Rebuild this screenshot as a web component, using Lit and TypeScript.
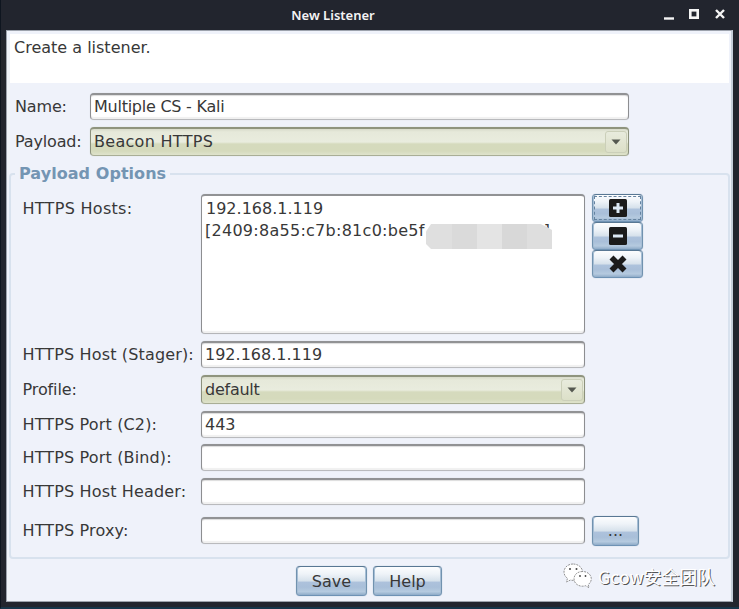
import { LitElement, html, svg, css } from "lit";
import { customElement, property } from "lit/decorators.js";

@customElement("text-field")
class TextField extends LitElement {
  @property() value = "";
  static styles = css`
    :host { display: block; box-sizing: border-box; height: 27px; background: #fff;
      border: 1px solid #8d8e91; border-top: 2px solid #919294; border-bottom-color: #b9babd;
      border-radius: 4px; padding-left: 3px; line-height: 23px; white-space: pre;
      box-shadow: inset 0 1px 1px #dcdcdc, inset 0 -2px 1px #f0f0f0, 0 0 1px #c9ced6; overflow: hidden; }
  `;
  render() { return html`${this.value}`; }
}

@customElement("combo-box")
class ComboBox extends LitElement {
  @property() value = "";
  static styles = css`
    :host { display: flex; box-sizing: border-box; height: 29px; justify-content: space-between;
      border: 1px solid #8b907c; border-top: 2px solid #8f947e; border-bottom-color: #a9ae96;
      border-radius: 4px; padding: 0 1px 0 3px; line-height: 25px;
      background: linear-gradient(#d8dbcb 0, #e6e9da 3px, #e9ecde 13px, #d5dabd 15px, #d5dabc 22px, #dfe3cc 100%);
      box-shadow: 0 0 1px #c4c8bb; }
    .arrow { box-sizing: border-box; width: 22px; height: 22px; margin-top: 2px; border: 1px solid #cbcfb9;
      border-radius: 3px; background: linear-gradient(#e8ebdd, #e2e5d2 50%, #dce0c8); display: flex;
      align-items: center; justify-content: center; }
    svg { display: block; }
  `;
  render() {
    return html`<span>${this.value}</span>
      <span class="arrow"><svg width="10" height="6" viewBox="0 0 10 6"><path d="M.5.5h9L5 5.5z" fill="#555850"/></svg></span>`;
  }
}

@customElement("push-button")
class PushButton extends LitElement {
  @property({ type: Boolean, reflect: true }) focused = false;
  static styles = css`
    :host { display: flex; position: relative; box-sizing: border-box; align-items: center; justify-content: center;
      height: 30px; border: 1px solid #7192af; border-top-color: #587793; border-bottom-color: #6e92b4;
      border-radius: 4px;
      background: linear-gradient(#fcfdfe 0, #eef3f8 25%, #d6e1eb 50%, #adc2dc 54%, #a9bfd9 72%, #b5cadf 88%, #8eabc8 100%);
      box-shadow: inset 1px 0 #a6bed5, inset -1px 0 #a6bed5, 0 0 1px #8fa9c0; }
    :host([focused])::after { content: ""; position: absolute; inset: 1px; border: 1px dashed #6583a0; }
  `;
  render() { return html`<slot></slot>`; }
}

const glyphs = {
  add: svg`<rect width="18" height="18" rx="1.5" fill="#1b1b1b"/><path d="M9 4v10M4 9h10" stroke="#dce9f5" stroke-width="3"/>`,
  remove: svg`<rect width="18" height="18" rx="1.5" fill="#1b1b1b"/><path d="M4 9h10" stroke="#dce9f5" stroke-width="3"/>`,
  clear: svg`<path d="M2.500 2.500 15.500 15.500M15.500 2.500 2.500 15.500" stroke="#1b1b1b" stroke-width="5.600"/>`,
};
const glyph = (name: keyof typeof glyphs) =>
  html`<svg class="glyph" width="18" height="18" viewBox="0 0 18 18">${glyphs[name]}</svg>`;

@customElement("app-root")
class AppRoot extends LitElement {
  static styles = css`
    :host { display: flex; flex-direction: column; position: relative; box-sizing: border-box; width: 739px; height: 609px;
      background: #22252e; font: 16px "DejaVu Sans", sans-serif; color: #383838; overflow: hidden;
      border-left: 1px solid #0e151f; border-bottom: 2px solid #173549; }
    .title { display: flex; height: 30px; flex: none; align-items: center; color: #f4f4f4; padding: 0 14px 0 6px; }
    .title h1 { flex: 1; margin: -1px 0 0; padding-right: 4px; text-align: center; font: 600 13px/26px "Noto Sans", sans-serif; }
    .title svg { display: block; margin-top: -2px; }
    .body { display: flex; flex-direction: column; box-sizing: border-box; width: 727px; height: 572px; margin-left: 5px;
      background: #eff2fa; border: 1px solid #9da3ad; border-right: 2px solid #c5ced9; padding: 3px 2px 0 3px; }
    .intro { height: 49px; flex: none; background: #fff; padding: 4px 0 0 4px; box-sizing: border-box; line-height: 19px; }
    .row { display: grid; align-items: center; line-height: 19px; }
    .top { grid-template-columns: 75px 539px; margin-left: 5px; }
    .top > span { letter-spacing: -.15px; }
    .name { margin-top: 10px; }
    .payload { margin-top: 7px; }
    .narrow { letter-spacing: -.25px; }
    .wide { letter-spacing: .3px; }
    .group { position: relative; box-sizing: border-box; height: 386px; width: 721px; margin: 17px 0 0 -1px;
      border: 2px solid #d8e2ee; border-radius: 4px; padding: 19px 0 0 12px; flex: none; }
    .group h2 { position: absolute; left: 4px; top: -12px; margin: 0; padding: 0 4px; background: #eff2fa;
      color: #7495b3; font-size: 16px; line-height: 22px; white-space: nowrap; letter-spacing: .05px; }
    .opt { grid-template-columns: 178px 384px auto; justify-content: start; }
    .opt > span { letter-spacing: .15px; margin-left: -.5px; white-space: nowrap; }
    .opt > span.wide { letter-spacing: .3px; }
    .opt > span.narrow { letter-spacing: -.1px; }
    .opt + .opt { margin-top: 7px; }
    .opt.tight { margin-top: 6px; }
    .opt.proxy { margin-top: 12px; }
    .hosts { align-items: start; }
    .hosts > span { padding-top: 5px; }
    .list { height: 140px; box-sizing: border-box; background: #fff; border: 1px solid #8d8e91; border-top: 2px solid #919294;
      border-bottom-color: #b4b5b8; border-radius: 4px; padding: 2px 0 0 4px; line-height: 22px; position: relative;
      box-shadow: inset 0 -2px 1px #f0f0f0, 0 0 1px #c9ced6; }
    .line { display: flex; margin-left: -1px; letter-spacing: .27px; }
    .tail { margin-left: 119px; }
    .mask { position: absolute; left: 224px; top: 28px; width: 126px; height: 25px;
      clip-path: polygon(4% 0, 91% 0, 96% 12%, 100% 24%, 100% 100%, 4% 100%, 0 80%, 0 30%);
      background: linear-gradient(90deg, #dfdfdf 0 26px, #dadada 26px 51px, #e4e4e4 51px 76px, #d8d8d8 76px 101px, #dedede 101px); }
    .buttons { display: flex; flex-direction: column; margin-left: 7px; width: 51px; }
    .buttons push-button { height: 28px; }
    .browse { width: 47px; margin: -2px 0 -2px 7px; }
    .glyph { display: block; margin-left: 1px; }
    .actions { display: flex; gap: 6px; margin: 7px 0 0 286px; }
    .save { width: 71px; }
    .help { width: 69px; }
    .brand { position: absolute; left: 562px; top: 562px; display: flex; align-items: center; gap: 6px; color: #fff;
      font: 17.8px/28px "Noto Sans CJK SC", sans-serif; text-shadow: 1px 1px 0 #555; white-space: nowrap; }
    .brand svg { display: block; }
  `;

  render() {
    return html`
      <header class="title">
        <h1>New Listener</h1>
        <svg width="62" height="12" viewBox="0 0 62 12" fill="none" stroke="#f5f5f5">
          <path d="M1 10.500h10" stroke-width="2.400"/>
          <rect x="27.300" y="2.300" width="7.400" height="7.400" stroke-width="2.600"/>
          <path d="m53 2 8 8m0-8-8 8" stroke-width="2.400"/>
        </svg>
      </header>
      <main class="body">
        <div class="intro">Create a listener.</div>
        <div class="row top name"><span>Name:</span><text-field class="narrow" value="Multiple CS - Kali"></text-field></div>
        <div class="row top payload"><span>Payload:</span><combo-box class="wide" value="Beacon HTTPS"></combo-box></div>
        <section class="group">
          <h2>Payload Options</h2>
          <div class="row opt hosts">
            <span class="wide">HTTPS Hosts:</span>
            <div class="list">
              <div>192.168.1.119</div>
              <div class="line"><span>[2409:8a55:c7b:81c0:be5f</span><span class="tail">]</span></div>
              <div class="mask"></div>
            </div>
            <div class="buttons">
              <push-button focused>${glyph("add")}</push-button>
              <push-button>${glyph("remove")}</push-button>
              <push-button>${glyph("clear")}</push-button>
            </div>
          </div>
          <div class="row opt"><span>HTTPS Host (Stager):</span><text-field value="192.168.1.119"></text-field></div>
          <div class="row opt"><span class="narrow">Profile:</span><combo-box class="narrow" value="default"></combo-box></div>
          <div class="row opt"><span>HTTPS Port (C2):</span><text-field value="443"></text-field></div>
          <div class="row opt tight"><span>HTTPS Port (Bind):</span><text-field></text-field></div>
          <div class="row opt"><span>HTTPS Host Header:</span><text-field></text-field></div>
          <div class="row opt proxy"><span>HTTPS Proxy:</span><text-field></text-field>
            <push-button class="browse">...</push-button></div>
        </section>
        <div class="actions">
          <push-button class="save">Save</push-button>
          <push-button class="help">Help</push-button>
        </div>
      </main>
      <div class="brand">
        <svg width="29" height="27" viewBox="0 0 29 27" fill="#fff" stroke="#666" stroke-width=".7" stroke-dasharray="2 1">
          <path d="M10 1C4.800 1 1 4.700 1 9c0 2.600 1.300 4.800 3.500 6.300L3.500 19l4-2c3 .8 5.500.5 8-1 3-1.700 4-4 4-7 0-4.500-4.300-8-9.500-8z"/>
          <path d="M19.500 8.500c-5 0-8.500 3.200-8.500 7.300s3.600 7.400 8.500 7.400c1 0 2-.2 3-.5l3.500 2-.8-3.200c2-1.400 3.100-3.400 3.100-5.700 0-4.100-3.800-7.300-8.800-7.300z"/>
          <g fill="#444" stroke="none"><circle cx="7" cy="6" r="1"/><circle cx="13.500" cy="6" r="1"/><circle cx="17" cy="13" r=".9"/><circle cx="22.500" cy="13" r=".9"/></g>
        </svg>
        <span>Gcow安全团队</span>
      </div>
    `;
  }
}
